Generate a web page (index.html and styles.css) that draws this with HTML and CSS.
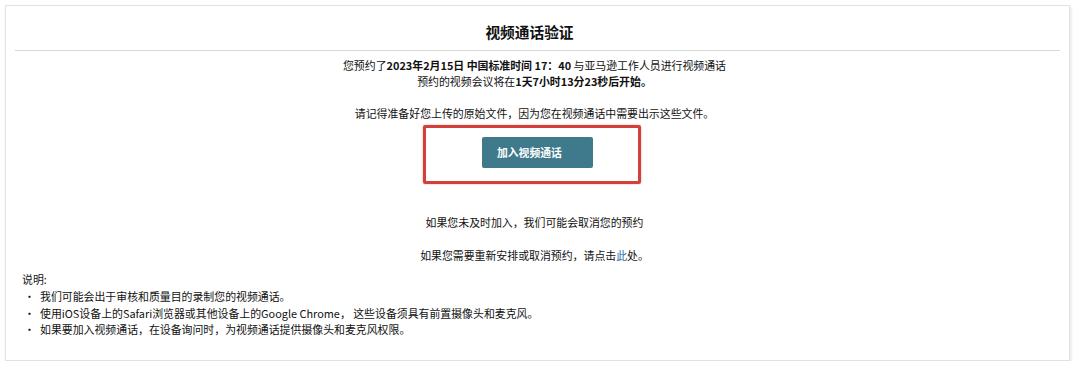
FILE: index.html
```html
<!DOCTYPE html>
<html lang="zh-CN">
<head>
    <meta charset="UTF-8">
    <meta name="viewport" content="width=device-width, initial-scale=1.0">
    <title>视频通话验证</title>
    <link rel="stylesheet" href="styles.css">
</head>
<body>
    <div class="card">
        <div class="card-header">
            <h2>视频通话验证</h2>
        </div>
        <div class="card-body">
            <p class="line">您预约了<b>2023年2月15日 中国标准时间 17：40</b> 与亚马逊工作人员进行视频通话</p>
            <p class="line">预约的视频会议将在<b>1天7小时13分23秒后开始。</b></p>
            <p class="line gap">请记得准备好您上传的原始文件，因为您在视频通话中需要出示这些文件。</p>
            <div class="cta-row">
                <div class="highlight">
                    <a href="#join" class="join-button">加入视频通话</a>
                </div>
            </div>
            <p class="line late">如果您未及时加入，我们可能会取消您的预约</p>
            <p class="line resched">如果您需要重新安排或取消预约，请点击<a href="#reschedule" class="link">此</a>处。</p>
        </div>
        <div class="notes">
            <p class="notes-title">说明:</p>
            <ul>
                <li>我们可能会出于审核和质量目的录制您的视频通话。</li>
                <li>使用iOS设备上的Safari浏览器或其他设备上的Google Chrome， 这些设备须具有前置摄像头和麦克风。</li>
                <li>如果要加入视频通话，在设备询问时，为视频通话提供摄像头和麦克风权限。</li>
            </ul>
        </div>
    </div>
</body>
</html>
```

FILE: styles.css
```css
body {
    margin: 0;
    padding: 0;
    background-color: #ffffff;
    font-family: "Noto Sans CJK SC", "Noto Sans", sans-serif;
    font-size: 10.9px;
    color: #111;
}
.card {
    margin: 5px 10px 0 5px;
    height: 354px;
    border: 1px solid #e2e2e2;
    box-shadow: 1px 2px 3px rgba(0, 0, 0, 0.12);
    background-color: #fff;
}
.card-header {
    margin: 0 9px;
    padding: 14px 0 7px;
    border-bottom: 1px solid #d9d9d9;
    text-align: center;
}
.card-header h2 {
    margin: 0;
    padding-right: 16px;
    font-size: 14.7px;
    line-height: 23px;
    font-weight: bold;
}
.card-body {
    padding-top: 6px;
    padding-right: 6px;
    text-align: center;
}
.line {
    margin: 0;
    line-height: 16px;
}
.line b {
    font-weight: bold;
}
.gap {
    margin-top: 16px;
}
.cta-row {
    margin-top: 4px;
    padding-left: 6px;
    text-align: center;
}
/* red annotation round the button */
.highlight {
    display: inline-block;
    margin-right: 11px;
    padding: 9px 45px 13px 56px;
    border: 3px solid #d2403c;
    border-radius: 2px;
    box-shadow: 0 0 2px rgba(210, 64, 60, 0.5);
}
.join-button {
    display: block;
    width: 96px;
    height: 31px;
    padding-left: 15px;
    line-height: 31px;
    background-color: #3e7a8b;
    color: #fff;
    font-weight: bold;
    font-size: 10.8px;
    text-align: left;
    text-decoration: none;
    border-radius: 2px;
}
.late {
    margin-top: 30px;
}
.resched {
    margin-top: 17px;
}
.link {
    color: #2f6aa8;
    text-decoration: none;
}
.notes {
    padding-left: 16px;
    margin-top: 8px;
}
.notes-title {
    margin: 0;
    line-height: 16px;
}
.notes ul {
    margin: 1px 0 0;
    padding: 0;
    list-style: none;
}
.notes li {
    position: relative;
    padding-left: 18px;
    line-height: 16.5px;
}
.notes li::before {
    content: "•";
    position: absolute;
    left: 2px;
}
```
